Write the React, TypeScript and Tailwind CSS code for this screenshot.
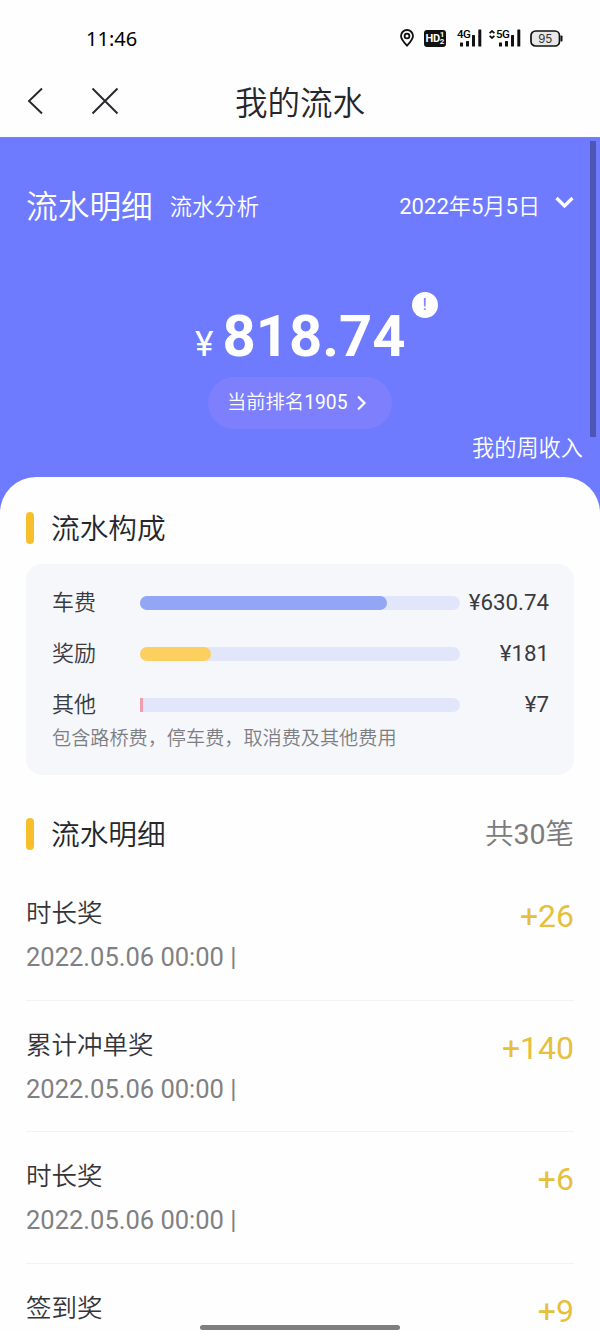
import type { ReactNode } from 'react'

interface Share {
  label: string
  amount: string
  width: number
  bar: string
}

interface Entry {
  title: string
  time?: string
  amount: string
}

const SHARES: Share[] = [
  { label: '车费', amount: '¥630.74', width: 247, bar: 'bg-[#92a6f5] rounded-full' },
  { label: '奖励', amount: '¥181', width: 71, bar: 'bg-[#fbd060] rounded-full' },
  { label: '其他', amount: '¥7', width: 3, bar: 'bg-[#f09db0]' },
]

const ENTRIES: Entry[] = [
  { title: '时长奖', time: '2022.05.06 00:00 |', amount: '+26' },
  { title: '累计冲单奖', time: '2022.05.06 00:00 |', amount: '+140' },
  { title: '时长奖', time: '2022.05.06 00:00 |', amount: '+6' },
  { title: '签到奖', amount: '+9' },
]

// Digits keep the regular weight inside the lighter Chinese text
function Mixed({ text }: { text: string }) {
  return (
    <>
      {text.split(/(\d+)/).map((part, i) =>
        i % 2 ? <span key={i} className="font-normal">{part}</span> : part
      )}
    </>
  )
}

function Signal({ label }: { label: string }) {
  return (
    <div className="relative w-[25px] h-[18px]">
      <svg width="25" height="18" viewBox="0 0 25 18" fill="#111">
        <rect x="3" y="13.5" width="3" height="4" rx="0.5" />
        <rect x="9" y="12" width="3" height="5.5" rx="0.5" />
        <rect x="15" y="6" width="3" height="11.5" rx="0.5" />
        <rect x="21.3" y="0.5" width="3" height="17" rx="0.5" />
      </svg>
      <span className="absolute left-0 top-0 text-[11.5px] leading-[10px] font-medium tracking-[-0.6px]">{label}</span>
    </div>
  )
}

function StatusBar() {
  return (
    <div className="h-[76px] pl-[86px] pr-[38px] flex items-center justify-between text-black">
      <span className="mt-[2px] font-['Noto_Sans',sans-serif] text-[20px] leading-6">11:46</span>
      <div className="flex items-center">
        <svg width="14" height="18" viewBox="0 0 14 18" fill="none" stroke="#111" strokeWidth="1.8">
          <path d="M7 16.6C4 13.4 1 10.4 1 7a6 6 0 0 1 12 0c0 3.4-3 6.4-6 9.6Z" />
          <circle cx="7" cy="7" r="2.4" />
        </svg>
        <div className="ml-[10px] w-[22px] h-[17px] rounded-[3px] bg-[#111] text-white flex items-center justify-center font-bold">
          <span className="text-[11px] leading-none tracking-[-0.3px]">HD</span>
          <span className="flex flex-col text-[8px] leading-[7px]">
            <span>1</span>
            <span>2</span>
          </span>
        </div>
        <div className="ml-[11px]">
          <Signal label="4G" />
        </div>
        <svg className="ml-[7px] mb-[8px]" width="6" height="9" viewBox="0 0 6 9" fill="none" stroke="#111" strokeWidth="1.7">
          <path d="M.6 3.2 3 1l2.4 2.2M.6 5.8 3 8l2.4-2.2" />
        </svg>
        <div className="ml-px">
          <Signal label="5G" />
        </div>
        <svg className="ml-[9px] -mr-px" width="33" height="17" viewBox="0 0 33 17" fill="none">
          <rect x="1" y="1" width="28.5" height="15" rx="4.5" fill="#e8e8e8" stroke="#111" strokeWidth="1.7" />
          <rect x="30.5" y="5.5" width="2" height="6" rx="0.8" fill="#111" />
          <text x="15.3" y="12.6" textAnchor="middle" fontSize="11.5" fontFamily="Inter, sans-serif" fill="#333">95</text>
        </svg>
      </div>
    </div>
  )
}

function NavBar() {
  return (
    <div className="h-[61px] grid grid-cols-[235px_1fr] text-[#26262b]">
      <div className="flex items-center pl-[27px] pb-[11px]">
        <svg width="17" height="28" viewBox="0 0 17 28" fill="none" stroke="currentColor" strokeWidth="1.9">
          <path d="M15 1.5 2 14l13 12.5" />
        </svg>
        <svg className="ml-[47px]" width="28" height="28" viewBox="0 0 28 28" fill="none" stroke="currentColor" strokeWidth="1.9">
          <path d="M1.5 1.5l25 25M26.5 1.5l-25 25" />
        </svg>
      </div>
      <h1 className="flex items-center pb-[5px] text-[32.5px] leading-none font-[350]">我的流水</h1>
    </div>
  )
}

function Hero() {
  return (
    <div className="relative h-[390px] bg-[#6e7bff] border-t border-[#7e87d6] text-white">
      <div className="h-[136px] px-[26px] flex items-center font-[350]">
        <span className="mt-[3px] text-[31.7px] leading-none">流水明细</span>
        <span className="ml-[17px] mt-[2px] text-[22.3px] leading-none">流水分析</span>
        <span className="ml-auto mt-px text-[22.1px] leading-none">
          <Mixed text="2022年5月5日" />
        </span>
        <svg className="ml-[15px] mb-[7px]" width="19" height="13" viewBox="0 0 19 13" fill="none" stroke="white" strokeWidth="3.2">
          <path d="M1.5 2 9.5 10l8-8" />
        </svg>
      </div>
      <div className="h-[103px] pl-[195px] flex items-end">
        <span className="text-[35px] leading-none mb-[15px]">¥</span>
        <span className="ml-[9px] text-[58px] font-bold leading-none mb-[12px]">818.74</span>
        <span className="ml-[6px] mb-[59px] w-[26px] h-[26px] rounded-full bg-white text-[#6e7bff] text-[17px] flex items-center justify-center">
          !
        </span>
      </div>
      <div className="mx-auto w-[184px] h-[52px] rounded-full bg-[#7d7ffd] flex items-center pl-[19px]">
        <span className="text-[19.3px] leading-none font-[350]">
          <Mixed text="当前排名1905" />
        </span>
        <svg className="ml-[9px]" width="11" height="16" viewBox="0 0 11 16" fill="none" stroke="white" strokeWidth="2.2">
          <path d="M2 1.5 8.5 8 2 14.5" />
        </svg>
      </div>
      <div className="pt-[7px] pr-[17px] text-right text-[22.2px] leading-[24px] font-[350]">我的周收入</div>
      <div className="absolute top-[3px] right-[4px] w-[6px] h-[296px] bg-[#4d56b5]" />
    </div>
  )
}

function SectionTitle({ children, extra }: { children: ReactNode; extra?: string }) {
  return (
    <div className="h-[32px] flex items-center font-[350]">
      <span className="w-[8px] h-[32px] rounded-full bg-[#f8bf2c]" />
      <h2 className="ml-[17px] mt-[2px] text-[28.7px] leading-none text-[#26262b]">{children}</h2>
      {extra && (
        <span className="ml-auto mt-[2px] text-[28.5px] leading-none text-[#7b7b7d]">
          <Mixed text={extra} />
        </span>
      )}
    </div>
  )
}

function ShareRow({ share }: { share: Share }) {
  return (
    <div className="h-[51px] flex items-center text-[22px] leading-none text-[#3a3b3f]">
      <span className="mt-px w-[88px] font-[350]">{share.label}</span>
      <span className="w-[320px] h-[14px] rounded-r-full bg-[#e2e6fb] data-[round=true]:rounded-full" data-round={share.width > 14}>
        <span className={`block h-full ${share.bar}`} style={{ width: share.width }} />
      </span>
      <span className="ml-auto text-[22.3px]">{share.amount}</span>
    </div>
  )
}

function EntryRow({ entry }: { entry: Entry }) {
  return (
    <li className="h-[131.5px] shrink-0 pt-[22px] flex justify-between border-b border-[#f2f2f2]">
      <div>
        <div className="text-[25.5px] leading-[44px] font-[350] text-[#343539]">{entry.title}</div>
        {entry.time && <div className="text-[25.5px] leading-[44px] text-[#808082]">{entry.time}</div>}
      </div>
      <span className="mt-[3px] text-[32px] leading-[44px] text-[#e5c03c]">{entry.amount}</span>
    </li>
  )
}

export default function App() {
  return (
    <div className="relative w-[600px] h-[1333px] overflow-hidden bg-[#fefefe] font-[Roboto,'Noto_Sans_CJK_SC',sans-serif]">
      <StatusBar />
      <NavBar />
      <Hero />
      <div className="relative -mt-[50px] px-[26px] pt-[35px] rounded-t-[36px] bg-[#fefefe]">
        <SectionTitle>流水构成</SectionTitle>
        <div className="mt-[20px] h-[211px] pt-[13px] pl-[26px] pr-[25px] rounded-[16px] bg-[#f5f7fb]">
          {SHARES.map((share) => (
            <ShareRow key={share.label} share={share} />
          ))}
          <p className="text-[19.15px] leading-[17px] font-[350] text-[#7d7e82]">包含路桥费，停车费，取消费及其他费用</p>
        </div>
        <div className="mt-[43px]">
          <SectionTitle extra="共30笔">流水明细</SectionTitle>
        </div>
        <ul className="mt-[19px] flex flex-col">
          {ENTRIES.map((entry, i) => (
            <EntryRow key={i} entry={entry} />
          ))}
        </ul>
      </div>
      <div className="absolute bottom-[3px] left-[200px] w-[200px] h-[5px] rounded-full bg-[#7f7f7f]" />
    </div>
  )
}
